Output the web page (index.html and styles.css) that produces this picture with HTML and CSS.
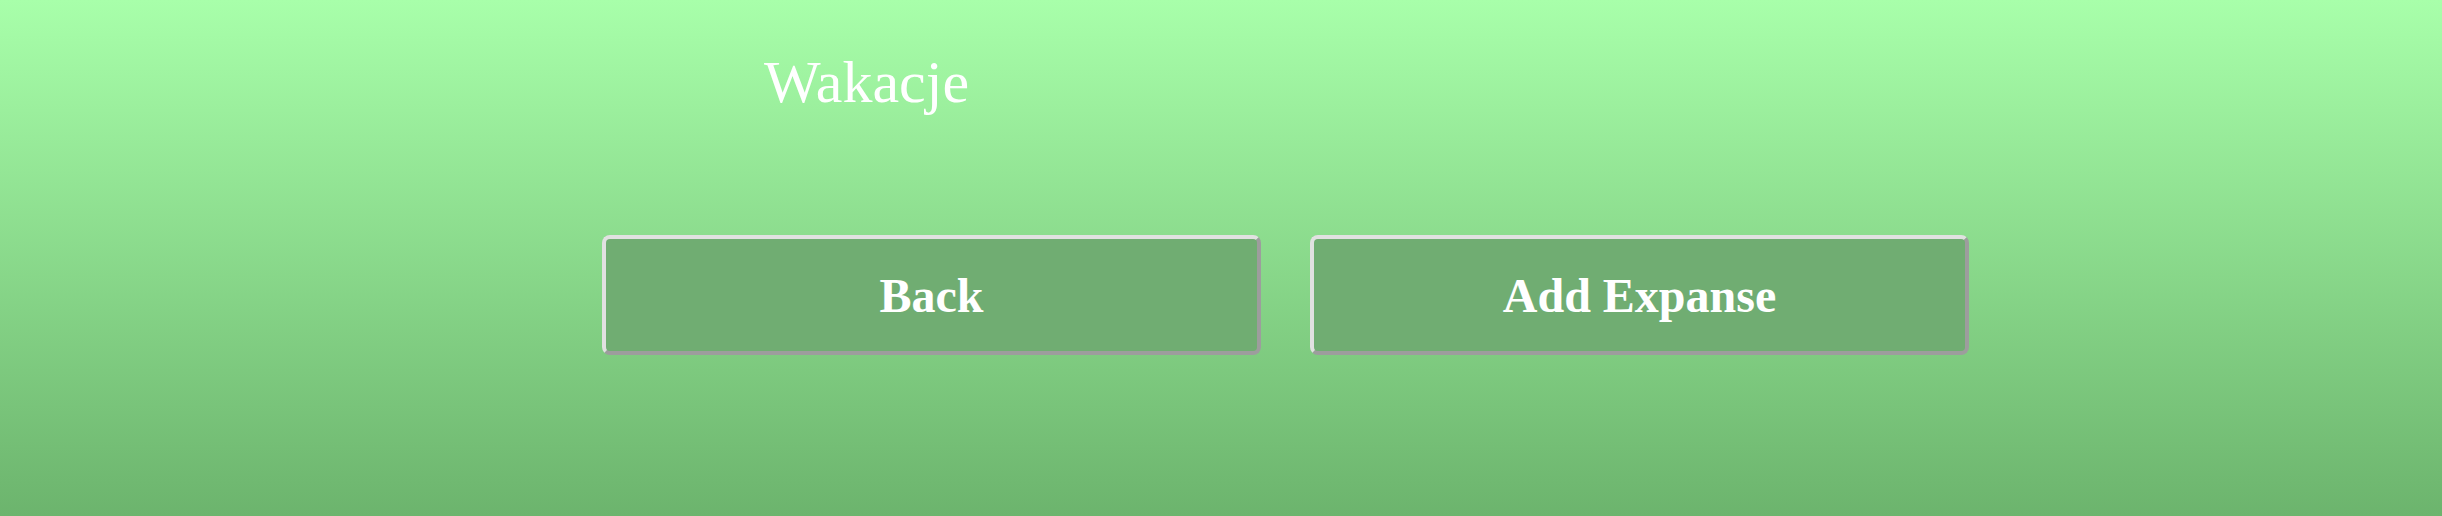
FILE: index.html
```html
<!DOCTYPE html>
<html lang="pl">
<head>
<meta charset="utf-8">
<title>Wakacje</title>
<link rel="stylesheet" href="styles.css">
</head>
<body>
<main class="page">
  <h1 class="title">Wakacje</h1>
  <div class="actions">
    <button class="btn" type="button">Back</button>
    <button class="btn" type="button">Add Expanse</button>
  </div>
</main>
</body>
</html>
```

FILE: styles.css
```css
html, body {
  margin: 0;
  padding: 0;
  height: 100%;
}

body {
  background: linear-gradient(to bottom, #a8ffaa 0%, #6cb46d 100%);
  font-family: "Liberation Serif", "Times New Roman", serif;
  color: #ffffff;
}

.page {
  display: flex;
  flex-direction: column;
  padding: 52px 0 0 764px;
}

.title {
  margin: 0;
  font-size: 60px;
  font-weight: normal;
  line-height: 60px;
  color: #ffffff;
}

.actions {
  display: flex;
  gap: 49px;
  margin: 123px 0 0 -162px;
}

.btn {
  box-sizing: border-box;
  width: 659px;
  height: 120px;
  background: #70ad72;
  border-width: 4px;
  border-style: solid;
  border-color: #e1e1e1 #9d9d9d #9d9d9d #e1e1e1;
  border-radius: 8px;
  font-family: "Liberation Serif", "Times New Roman", serif;
  font-size: 48px;
  font-weight: bold;
  color: #ffffff;
  padding: 0;
  cursor: pointer;
}
```
